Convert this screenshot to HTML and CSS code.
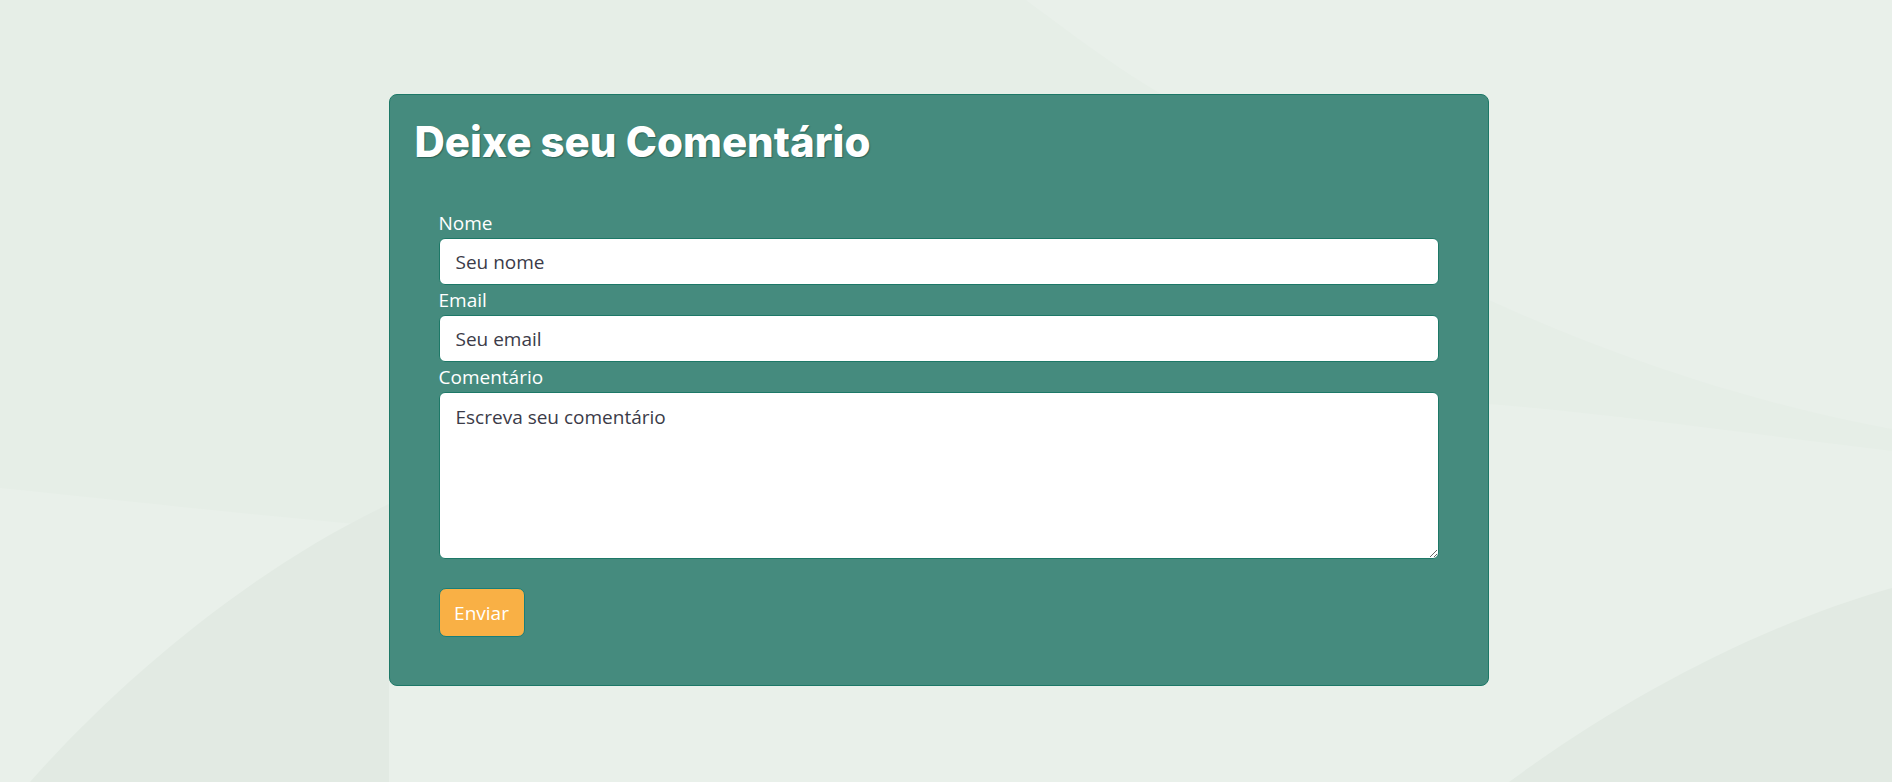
FILE: index.html
```html
<!DOCTYPE html>
<html lang="pt-BR">
<head>
<meta charset="utf-8">
<title>Deixe seu Comentário</title>
<link rel="stylesheet" href="styles.css">
</head>
<body>
<svg class="bg-art" viewBox="0 0 1892 782" preserveAspectRatio="none" aria-hidden="true">
  <path d="M0 0 L1026 0 C1080 40 1120 70 1158 92 C1260 160 1370 240 1489 300 C1620 360 1760 405 1892 429 L1892 451 C1760 435 1620 415 1489 404 C1100 400 700 470 390 527 C250 515 120 500 0 488 Z" fill="#e6eee7"/>
  <path d="M30 782 C120 680 250 570 389 504 L389 782 Z" fill="#e2eae3"/>
  <path d="M1509 782 C1620 700 1760 625 1892 588 L1892 782 Z" fill="#e2eae3"/>
</svg>
<main class="page">
  <section class="card">
    <h1 class="card-title">Deixe seu Comentário</h1>
    <form class="comment-form">
      <label class="field-label" for="nome">Nome</label>
      <input class="field-input" id="nome" type="text" placeholder="Seu nome">
      <label class="field-label" for="email">Email</label>
      <input class="field-input" id="email" type="email" placeholder="Seu email">
      <label class="field-label" for="comentario">Comentário</label>
      <textarea class="field-input field-textarea" id="comentario" placeholder="Escreva seu comentário"></textarea>
      <div class="actions">
        <button class="submit-btn" type="submit">Enviar</button>
      </div>
    </form>
  </section>
</main>
</body>
</html>
```

FILE: styles.css
```css
html, body {
  margin: 0;
  padding: 0;
}

body {
  background: #e9f0ea;
  font-family: "Open Sans", "Noto Sans", sans-serif;
  min-height: 100vh;
}

.bg-art {
  position: fixed;
  inset: 0;
  width: 100%;
  height: 100%;
  z-index: -1;
}

.page {
  display: flex;
  justify-content: center;
  padding: 94px 15px 0 0;
}

.card {
  width: 1100px;
  box-sizing: border-box;
  background: #458b7e;
  border: 1px solid #1d7867;
  border-radius: 8px;
  padding: 22px 24px 24px;
}

.card-title {
  margin: 0 0 41px;
  font-family: "Inter", sans-serif;
  font-weight: 800;
  font-size: 42px;
  line-height: 50px;
  color: #ffffff;
  letter-spacing: 0;
  text-shadow: 1px 1px 1px rgba(20, 70, 60, 0.55);
  padding-left: 1px;
}

.comment-form {
  display: flex;
  flex-direction: column;
  padding: 0 25px 24px;
}

.field-label {
  display: block;
  font-size: 19px;
  line-height: 30px;
  color: #ffffff;
}

.field-input {
  display: block;
  box-sizing: border-box;
  width: 100%;
  height: 47px;
  margin: 0;
  padding: 0 16px;
  border: 1px solid #1d7867;
  border-radius: 6px;
  background: #ffffff;
  font-family: "Open Sans", "Noto Sans", sans-serif;
  font-size: 19px;
  color: #222;
  outline: none;
}

.field-input::placeholder {
  color: #3b3b48;
  opacity: 1;
}

.field-textarea {
  height: 167px;
  padding: 10px 16px;
  line-height: 28px;
  resize: vertical;
}

.actions {
  display: flex;
  padding-top: 29px;
}

.submit-btn {
  box-sizing: border-box;
  height: 49px;
  width: 86px;
  padding: 0;
  background: #f9b045;
  border: 1px solid #187e7a;
  border-radius: 7px;
  color: #ffffff;
  font-family: "Open Sans", "Noto Sans", sans-serif;
  font-size: 19px;
  cursor: pointer;
}
```
